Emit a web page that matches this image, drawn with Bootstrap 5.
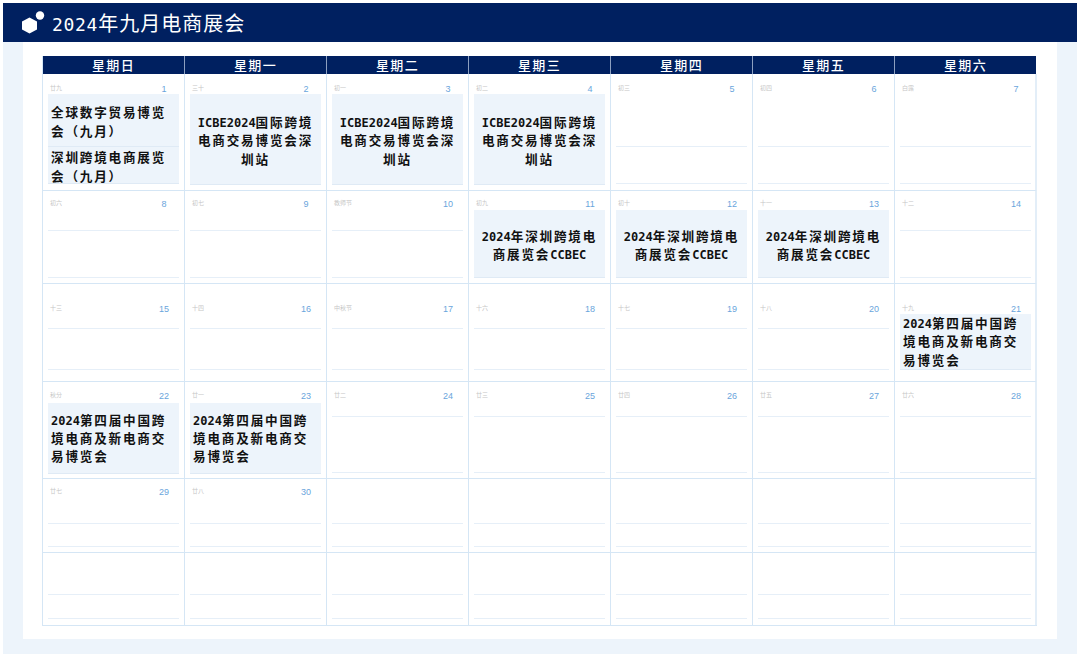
<!DOCTYPE html>
<html lang="zh">
<head>
<meta charset="utf-8">
<title>2024年九月电商展会</title>
<link href="https://cdn.jsdelivr.net/npm/bootstrap@5.3.0/dist/css/bootstrap.min.css" rel="stylesheet">
<style>
html,body{height:100%;background:#fff;overflow:hidden}
body{font-family:"Liberation Sans","Noto Sans CJK SC",sans-serif;padding:3px}
.frame{height:651px;background:#edf4fb}
.topbar{height:39px;background:#002060;color:#fff;padding-left:19px;gap:6px}
.topbar h1{font-size:20px;font-weight:400;letter-spacing:1px;margin:0;line-height:39px;font-family:"Noto Sans CJK SC",sans-serif}
.topbar h1 .la{font-family:"DejaVu Sans Mono",monospace;font-size:18px;letter-spacing:.7px;font-weight:400;line-height:0}
.panel{height:597px;margin:0 20px;background:#fff;padding:14px 0 0 19px}
.cal{display:grid;width:995px;grid-template-columns:repeat(7,142px);grid-template-rows:18px 117px 92.5px 98px 97.5px 74px 71.5px;border-bottom:1px solid #d5e6f5}
.wd{background:#002060;color:#fff;text-align:center;font-size:13px;font-weight:500;letter-spacing:1.400px;line-height:18px;border-left:1px solid #8c9fc0;font-family:"Noto Sans CJK SC",sans-serif;overflow:hidden}
.wd:first-child{border-left-color:#d5e6f5}
.dc{border-left:1px solid #d5e6f5;border-bottom:1px solid #d5e6f5;padding:0 5px;display:flex;flex-direction:column;min-width:0}
.dc:nth-child(7n){border-right:2px solid #e3eef8;width:143px;padding-right:4px}
.dc.last{border-bottom:0}
.hd{display:flex;justify-content:space-between;align-items:flex-end;padding:0 10px 0 2px;flex:none;line-height:10px}
.lu{font-size:6px;color:#c6c6c6;font-family:"Noto Sans CJK SC",sans-serif}
.nu{font-size:9px;color:#6aa5dc;min-width:10px;text-align:center;transform:translateY(1px)}
.b1{flex:none;border-bottom:1px solid #e6eff8}
.b2{flex:none;border-bottom:1px solid #e6eff8}
.ev{background:#edf4fb;border-bottom:1px solid #dfeaf5;color:#111;font-family:"Noto Sans CJK SC",sans-serif;font-size:12.600px;font-weight:700;line-height:18.300px;letter-spacing:1.800px;display:flex;align-items:center;padding:3px 3px 0;flex:none;overflow:hidden}
.ev .la{font-family:"DejaVu Sans Mono",monospace;font-size:12px;letter-spacing:0;font-weight:700;line-height:0}
.ev.ctr{justify-content:center;text-align:center;padding:3px 7px 0}
.r1 .hd{height:20px;padding-bottom:1.5px}.r1 .b1{height:53px}.r1 .b2{height:37px}
.r2 .hd{height:19px;padding-bottom:2px}.r2 .b1{height:21px}.r2 .b2{height:47px}
.r3 .hd{height:30px;padding-bottom:1px}.r3 .b1{height:15px}.r3 .b2{height:41px}
.r4 .hd{height:21px;padding-bottom:3px}.r4 .b1{height:14px}.r4 .b2{height:56px}
.r5 .hd{height:21px;padding-bottom:4px}.r5 .b1{height:24px}.r5 .b2{height:23px}
.r6 .hd{height:21px}.r6 .b1{height:21px}.r6 .b2{height:24px}
.h90{height:91px}.h37{height:37px}.h68{height:68px}.h55{height:56px}.h70{height:71px;padding-top:1px}
.dc.r3 .ev{align-items:flex-start;padding-top:.5px}
</style>
</head>
<body>
<div class="frame">
  <div class="topbar d-flex align-items-center">
    <svg width="24" height="24" viewBox="0 0 24 24" aria-hidden="true"><polygon points="7.500,6.500 15,10.500 15,18.500 7.500,22.500 0,18.500 0,10.500" fill="#fff"/><circle cx="18" cy="4.500" r="4.200" fill="#fff"/></svg>
    <h1><span class="la">2024</span>年九月电商展会</h1>
  </div>
  <div class="panel">
    <div class="cal">
      <div class="wd">星期日</div><div class="wd">星期一</div><div class="wd">星期二</div><div class="wd">星期三</div><div class="wd">星期四</div><div class="wd">星期五</div><div class="wd">星期六</div>

      <div class="dc r1"><div class="hd"><span class="lu">廿九</span><span class="nu">1</span></div><div class="ev b1">全球数字贸易博览会（九月）</div><div class="ev h37">深圳跨境电商展览会（九月）</div></div>
      <div class="dc r1"><div class="hd"><span class="lu">三十</span><span class="nu">2</span></div><div class="ev ctr h90"><div><span class="la">ICBE2024</span>国际跨境<br>电商交易博览会深<br>圳站</div></div></div>
      <div class="dc r1"><div class="hd"><span class="lu">初一</span><span class="nu">3</span></div><div class="ev ctr h90"><div><span class="la">ICBE2024</span>国际跨境<br>电商交易博览会深<br>圳站</div></div></div>
      <div class="dc r1"><div class="hd"><span class="lu">初二</span><span class="nu">4</span></div><div class="ev ctr h90"><div><span class="la">ICBE2024</span>国际跨境<br>电商交易博览会深<br>圳站</div></div></div>
      <div class="dc r1"><div class="hd"><span class="lu">初三</span><span class="nu">5</span></div><div class="b1"></div><div class="b2"></div></div>
      <div class="dc r1"><div class="hd"><span class="lu">初四</span><span class="nu">6</span></div><div class="b1"></div><div class="b2"></div></div>
      <div class="dc r1"><div class="hd"><span class="lu">白露</span><span class="nu">7</span></div><div class="b1"></div><div class="b2"></div></div>

      <div class="dc r2"><div class="hd"><span class="lu">初六</span><span class="nu">8</span></div><div class="b1"></div><div class="b2"></div></div>
      <div class="dc r2"><div class="hd"><span class="lu">初七</span><span class="nu">9</span></div><div class="b1"></div><div class="b2"></div></div>
      <div class="dc r2"><div class="hd"><span class="lu">教师节</span><span class="nu">10</span></div><div class="b1"></div><div class="b2"></div></div>
      <div class="dc r2"><div class="hd"><span class="lu">初九</span><span class="nu">11</span></div><div class="ev ctr h68"><div><span class="la">2024</span>年深圳跨境电<br>商展览会<span class="la">CCBEC</span></div></div></div>
      <div class="dc r2"><div class="hd"><span class="lu">初十</span><span class="nu">12</span></div><div class="ev ctr h68"><div><span class="la">2024</span>年深圳跨境电<br>商展览会<span class="la">CCBEC</span></div></div></div>
      <div class="dc r2"><div class="hd"><span class="lu">十一</span><span class="nu">13</span></div><div class="ev ctr h68"><div><span class="la">2024</span>年深圳跨境电<br>商展览会<span class="la">CCBEC</span></div></div></div>
      <div class="dc r2"><div class="hd"><span class="lu">十二</span><span class="nu">14</span></div><div class="b1"></div><div class="b2"></div></div>

      <div class="dc r3"><div class="hd"><span class="lu">十三</span><span class="nu">15</span></div><div class="b1"></div><div class="b2"></div></div>
      <div class="dc r3"><div class="hd"><span class="lu">十四</span><span class="nu">16</span></div><div class="b1"></div><div class="b2"></div></div>
      <div class="dc r3"><div class="hd"><span class="lu">中秋节</span><span class="nu">17</span></div><div class="b1"></div><div class="b2"></div></div>
      <div class="dc r3"><div class="hd"><span class="lu">十六</span><span class="nu">18</span></div><div class="b1"></div><div class="b2"></div></div>
      <div class="dc r3"><div class="hd"><span class="lu">十七</span><span class="nu">19</span></div><div class="b1"></div><div class="b2"></div></div>
      <div class="dc r3"><div class="hd"><span class="lu">十八</span><span class="nu">20</span></div><div class="b1"></div><div class="b2"></div></div>
      <div class="dc r3"><div class="hd"><span class="lu">十九</span><span class="nu">21</span></div><div class="ev h55"><div><span class="la">2024</span>第四届中国跨<br>境电商及新电商交<br>易博览会</div></div></div>

      <div class="dc r4"><div class="hd"><span class="lu">秋分</span><span class="nu">22</span></div><div class="ev h70"><div><span class="la">2024</span>第四届中国跨<br>境电商及新电商交<br>易博览会</div></div></div>
      <div class="dc r4"><div class="hd"><span class="lu">廿一</span><span class="nu">23</span></div><div class="ev h70"><div><span class="la">2024</span>第四届中国跨<br>境电商及新电商交<br>易博览会</div></div></div>
      <div class="dc r4"><div class="hd"><span class="lu">廿二</span><span class="nu">24</span></div><div class="b1"></div><div class="b2"></div></div>
      <div class="dc r4"><div class="hd"><span class="lu">廿三</span><span class="nu">25</span></div><div class="b1"></div><div class="b2"></div></div>
      <div class="dc r4"><div class="hd"><span class="lu">廿四</span><span class="nu">26</span></div><div class="b1"></div><div class="b2"></div></div>
      <div class="dc r4"><div class="hd"><span class="lu">廿五</span><span class="nu">27</span></div><div class="b1"></div><div class="b2"></div></div>
      <div class="dc r4"><div class="hd"><span class="lu">廿六</span><span class="nu">28</span></div><div class="b1"></div><div class="b2"></div></div>

      <div class="dc r5"><div class="hd"><span class="lu">廿七</span><span class="nu">29</span></div><div class="b1"></div><div class="b2"></div></div>
      <div class="dc r5"><div class="hd"><span class="lu">廿八</span><span class="nu">30</span></div><div class="b1"></div><div class="b2"></div></div>
      <div class="dc r5"><div class="hd"></div><div class="b1"></div><div class="b2"></div></div>
      <div class="dc r5"><div class="hd"></div><div class="b1"></div><div class="b2"></div></div>
      <div class="dc r5"><div class="hd"></div><div class="b1"></div><div class="b2"></div></div>
      <div class="dc r5"><div class="hd"></div><div class="b1"></div><div class="b2"></div></div>
      <div class="dc r5"><div class="hd"></div><div class="b1"></div><div class="b2"></div></div>

      <div class="dc r6 last"><div class="hd"></div><div class="b1"></div><div class="b2"></div></div>
      <div class="dc r6 last"><div class="hd"></div><div class="b1"></div><div class="b2"></div></div>
      <div class="dc r6 last"><div class="hd"></div><div class="b1"></div><div class="b2"></div></div>
      <div class="dc r6 last"><div class="hd"></div><div class="b1"></div><div class="b2"></div></div>
      <div class="dc r6 last"><div class="hd"></div><div class="b1"></div><div class="b2"></div></div>
      <div class="dc r6 last"><div class="hd"></div><div class="b1"></div><div class="b2"></div></div>
      <div class="dc r6 last"><div class="hd"></div><div class="b1"></div><div class="b2"></div></div>
    </div>
  </div>
</div>
</body>
</html>
